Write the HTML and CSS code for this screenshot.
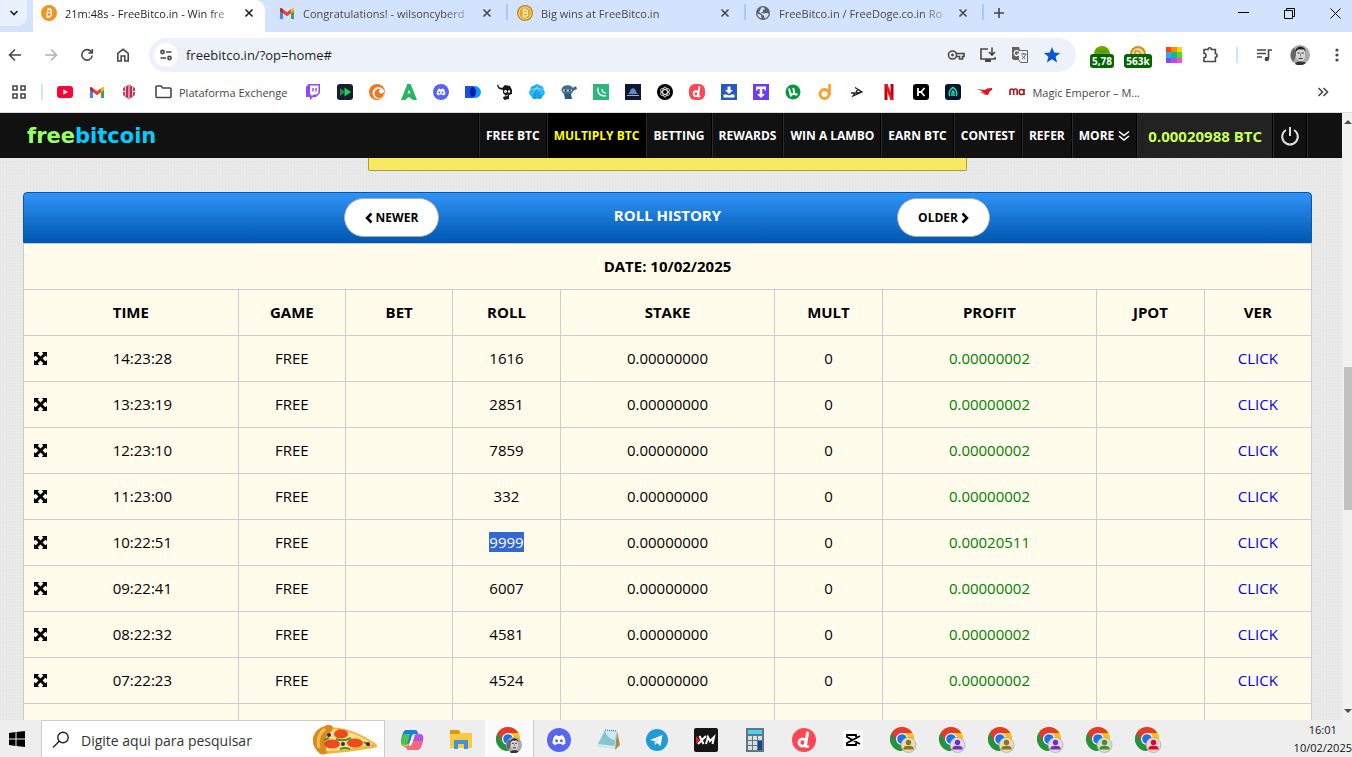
FILE: index.html
```html
<!DOCTYPE html>
<html lang="pt-BR">
<head>
    <meta charset="UTF-8">
    <meta name="viewport" content="width=device-width, initial-scale=1.0">
    <title>FreeBitco.in - Roll History</title>
    <link rel="stylesheet" href="styles.css">
</head>
<body>

<!-- shared icons -->
<svg class="sprite" aria-hidden="true">
    <symbol id="close" viewBox="0 0 10 10"><path d="M1.5 1.5l7 7M8.5 1.5l-7 7" fill="none" stroke="currentColor" stroke-width="1.6"/></symbol>
    <symbol id="gmail" viewBox="0 0 16 16">
        <path d="M1 3v11h3V7z" fill="#4285f4"/><path d="M15 3v11h-3V7z" fill="#34a853"/>
        <path d="M12 4.200l1.300-1C14 2.600 15 3 15 4.200V6l-3 2.300z" fill="#fbbc04"/>
        <path d="M4 4.200l4 3 4-3v4.100l-4 3-4-3z" fill="#ea4335"/>
        <path d="M1 4.200C1 3 2 2.600 2.700 3.200L4 4.200v4.100L1 6z" fill="#c5221f"/>
    </symbol>
    <symbol id="discord" viewBox="0 0 24 24">
        <circle cx="12" cy="12" r="12" fill="#5865f2"/>
        <path d="M8 7.500l2-.6.7 1h2.600l.7-1 2 .6c1.800 2.300 2.600 5 2.400 8-1 .9-2 1.400-3.200 1.700l-.9-1.500h-4.600l-.9 1.500c-1.200-.3-2.200-.8-3.200-1.700-.2-3 .6-5.700 2.400-8z" fill="#fff"/>
        <circle cx="9.600" cy="12.700" r="1.500" fill="#5865f2"/><circle cx="14.400" cy="12.700" r="1.500" fill="#5865f2"/>
    </symbol>
    <symbol id="letter-d" viewBox="0 0 24 24">
        <path d="M15.500 5l-2 11.500c-.2 1.500.5 2.300 2 2" fill="none" stroke="#fff" stroke-width="3" stroke-linecap="round"/>
        <ellipse cx="10.500" cy="14.500" rx="3.500" ry="3.700" fill="none" stroke="#fff" stroke-width="2.800"/>
    </symbol>
    <symbol id="chrome" viewBox="0 0 24 24">
        <circle cx="12" cy="12" r="12" fill="#fbc116"/>
        <path d="M1.600 6A12 12 0 0 0 12 24l5.200-9L12 12z" fill="#229342"/>
        <path d="M12 6h10.400A12 12 0 0 0 1.600 6l5.200 9z" fill="#e33b2e"/>
        <path d="M17.200 15L12 24A12 12 0 0 0 22.400 6H12z" fill="#fbc116"/>
        <circle cx="12" cy="12" r="6" fill="#fff"/><circle cx="12" cy="12" r="4.800" fill="#1a73e8"/>
    </symbol>
    <symbol id="chrome-profile" viewBox="0 0 27 27">
        <use href="#chrome" width="24" height="24"/>
        <circle cx="18.500" cy="18" r="7.500" stroke="#9a9a90" stroke-width=".6"/>
        <circle cx="18.500" cy="15.500" r="2.700" fill="currentColor"/>
        <path d="M13.500 22.500v-1.500c0-3 10-3 10 0v1.500z" fill="currentColor"/>
    </symbol>
    <symbol id="avatar" viewBox="0 0 20 20">
        <circle cx="10" cy="10" r="10" fill="#aaa"/>
        <path d="M3 17C0 12 0 6 4 3l3 4-2 6z" fill="#666"/>
        <path d="M6 7c0-6 9-6 9 0v5c-1 6-8 6-9 0z" fill="#d5d5d5"/>
        <path d="M5.500 7C5 0 16 0 15.500 7L14 4.500H8z" fill="#222"/>
        <path d="M7.500 8h2.200M11.500 8h2.200M8.500 13.500h4" stroke="#333" stroke-width="1.200"/>
        <path d="M10.500 8.500v3" stroke="#888"/>
        <path d="M5 19c1-2 3-2.500 5-2.500s5 .5 6 1.500c-4 3-8 3-11 1z" fill="#333"/>
    </symbol>
    <symbol id="expand" viewBox="0 0 14 14">
        <path d="M0 0h5.500L4 1.800l3 3 3-3L8.500 0H14v5.500L12.200 4l-3 3 3 3L14 8.500V14H8.500l1.500-1.800-3-3-3 3L5.500 14H0V8.500L1.800 10l3-3-3-3L0 5.500z"/>
    </symbol>
</svg>

<div class="tab-strip">
    <button class="tab-search" aria-label="Search tabs"><svg width="10" height="10" viewBox="0 0 10 10"><path d="M1.500 3l3.500 3.500L8.500 3" class="line"/></svg></button>
    <div class="tab active">
        <svg class="favicon" viewBox="0 0 16 16"><circle cx="8" cy="8" r="8" fill="#f7931a"/><path d="M6.500 4.500h2.300c2.300.2 2.100 3 0 3.200H6.300h2.800c2.300.3 2 3.700-.5 3.800H5.500M6.800 4.500l-1 7M7.500 3l-.3 1.500M9.300 3L9 4.500M6.700 11.500l-.3 1.500M8.500 11.500l-.3 1.500" fill="none" stroke="#fff" stroke-width="1.300"/></svg>
        <span class="tab-title">21m:48s - FreeBitco.in - Win fre</span>
        <button class="tab-close" aria-label="Close tab"><svg width="10" height="10"><use href="#close"/></svg></button>
    </div>
    <div class="tab">
        <svg class="favicon"><use href="#gmail"/></svg>
        <span class="tab-title">Congratulations! - wilsoncyberd</span>
        <button class="tab-close" aria-label="Close tab"><svg width="10" height="10"><use href="#close"/></svg></button>
    </div>
    <div class="tab">
        <svg class="favicon" viewBox="0 0 16 16"><circle cx="8" cy="8" r="8" fill="#b9851d"/><circle cx="8" cy="8" r="6.800" fill="#f4cf68"/><circle cx="8" cy="8" r="5.500" fill="#dca936"/><path d="M6.500 4.500v7M5.500 5h3.300c2 .2 2 2.700 0 2.900H6.500h2.700c2.100.3 2 3.100-.2 3.100H5.500M7 3.500V5M8.800 3.500V5M7 11v1.500M8.800 11v1.500" fill="none" stroke="#fff3c0" stroke-width="1.200"/></svg>
        <span class="tab-title">Big wins at FreeBitco.in</span>
        <button class="tab-close" aria-label="Close tab"><svg width="10" height="10"><use href="#close"/></svg></button>
    </div>
    <div class="tab">
        <svg class="favicon" viewBox="0 0 16 16"><circle cx="8" cy="8" r="7" fill="#5f6368"/><path d="M2.500 8.500L6 10l.5 3.500C4 13 2.500 11 2.500 8.500zM6.500 2.500l2-.3L10 4 8 5v1.500L6 7.500l2.500 1L11 8l2.800.5c-.3 2.500-2 4.300-4 5L9 11 6 8.500 4 7z" fill="#d3e3fd"/></svg>
        <span class="tab-title">FreeBitco.in / FreeDoge.co.in Ro</span>
        <button class="tab-close" aria-label="Close tab"><svg width="10" height="10"><use href="#close"/></svg></button>
    </div>
    <button class="new-tab" aria-label="New tab"><svg width="12" height="12" viewBox="0 0 12 12"><path d="M6 1v10M1 6h10" class="line"/></svg></button>
    <div class="window-controls">
        <button aria-label="Minimize"><svg width="11" height="11" viewBox="0 0 11 11"><path d="M0 4.500h11" class="hair"/></svg></button>
        <button aria-label="Restore"><svg width="11" height="11" viewBox="0 0 11 11"><path d="M.5 2.500h8v8h-8zM2.500 2.500v-2h8v8h-2" class="hair"/></svg></button>
        <button aria-label="Close"><svg width="11" height="11" viewBox="0 0 11 11"><path d="M.5.5l10 10M10.500.5l-10 10" class="hair"/></svg></button>
    </div>
</div>

<div class="toolbar">
    <div class="nav-buttons">
        <button class="icon-btn" aria-label="Back"><svg width="16" height="16" viewBox="0 0 16 16"><path d="M14 8H3M8 2.500L2.500 8 8 13.500" class="line"/></svg></button>
        <button class="icon-btn disabled" aria-label="Forward"><svg width="16" height="16" viewBox="0 0 16 16"><path d="M2 8h11M8 2.500L13.500 8 8 13.500" class="line"/></svg></button>
        <button class="icon-btn" aria-label="Reload"><svg width="16" height="16" viewBox="0 0 16 16"><path d="M13.200 8.500A5.200 5.200 0 1 1 12 4.500l1 1.200M13.300 2v4H9.300" class="line"/></svg></button>
        <button class="icon-btn" aria-label="Home"><svg width="16" height="16" viewBox="0 0 16 16"><path d="M2.800 14V6.300L8 2.300l5.200 4V14H9.800V9H6.200v5z" class="line"/></svg></button>
    </div>
    <div class="omnibox">
        <button class="site-info" aria-label="Site information"><svg width="14" height="14" viewBox="0 0 14 14"><circle cx="3.500" cy="4" r="1.600" class="line"/><path d="M7 4h5.500M1.500 10H7" class="line"/><circle cx="10.500" cy="10" r="1.600" class="line"/></svg></button>
        <input class="url" type="text" aria-label="Address" value="freebitco.in/?op=home#">
        <button class="omni-btn" aria-label="Passwords"><svg width="18" height="18" viewBox="0 0 18 18"><circle cx="5.500" cy="9" r="4" class="line"/><circle cx="5.500" cy="9" r="1.400" fill="currentColor"/><path d="M9 7.500h8v3h-1.500V13h-3v-2.500H9" class="line"/></svg></button>
        <button class="omni-btn" aria-label="Install"><svg width="18" height="18" viewBox="0 0 18 18"><path d="M9 3H2v10h14v-2M13 1.500v7M10 6l3 3 3-3" class="line"/><path d="M6 13h6v3H6z" fill="currentColor"/></svg></button>
        <button class="omni-btn" aria-label="Translate"><svg width="18" height="18" viewBox="0 0 18 18"><path d="M1 1h7l4 13H2.500L1 12.500z" fill="#5f6368"/><path d="M8 4.500h8.500v12h-7L8 14" fill="#edf2fa" stroke="#5f6368"/><path d="M7.500 5.500a2.500 2.500 0 1 0 .5 2.500H6" fill="none" stroke="#fff" stroke-width="1.200"/><path d="M10 8h5.500M12.700 6.800V8M14.500 8c-.5 2.500-2 4-3.500 5M11 9.500c.8 1.500 2 2.800 3.500 3.500" fill="none" stroke="#5f6368"/></svg></button>
        <button class="omni-btn" aria-label="Bookmarked"><svg width="18" height="18" viewBox="0 0 18 18"><path d="M9 1l2.200 5.500 6 .4-4.600 3.800 1.500 5.800L9 13.300l-5.100 3.200 1.500-5.800L.8 6.900l6-.4z" fill="#0b57d0"/></svg></button>
    </div>
    <div class="extensions">
        <button class="icon-btn ext"><svg width="16" height="8" viewBox="0 0 16 8"><path d="M0 8a8 8 0 0 1 16 0z" fill="#67a800"/><path d="M3 4c3 2 7 2 10 0" stroke="#4c8500" fill="none"/></svg><span class="ext-badge">5,78</span></button>
        <button class="icon-btn ext"><svg width="16" height="8" viewBox="0 0 16 8"><path d="M0 8a8 8 0 0 1 16 0z" fill="#c89326"/><path d="M2 8a6 6 0 0 1 12 0z" fill="#f2d68b"/><path d="M5 8V5h4l2 3" stroke="#b08020" fill="none"/></svg><span class="ext-badge">563k</span></button>
        <button class="icon-btn" aria-label="Color extension"><svg width="16" height="16" viewBox="0 0 16 16" shape-rendering="crispEdges"><path d="M0 0h5v5H0z" fill="#ff4400"/><path d="M5 0h6v5H5z" fill="#ff8c00"/><path d="M11 0h5v5h-5z" fill="#ffd400"/><path d="M0 5h5v6H0z" fill="#36a2f5"/><path d="M5 5h6v6H5z" fill="#12b981"/><path d="M11 5h5v6h-5z" fill="#52d62c"/><path d="M0 11h5v5H0z" fill="#7d4dff"/><path d="M5 11h6v5H5z" fill="#b04cff"/><path d="M11 11h5v5h-5z" fill="#ff50c8"/></svg></button>
        <button class="icon-btn" aria-label="Extensions"><svg width="18" height="18" viewBox="0 0 18 18"><path d="M3 3.500h4a1.700 1.700 0 0 1 3.400 0h4v4.300a1.700 1.700 0 0 1 0 3.400v4.300H3v-3.700c2.700-.3 2.700-4.200 0-4.500z" class="line"/></svg></button>
        <span class="divider"></span>
        <button class="icon-btn" aria-label="Media"><svg width="16" height="16" viewBox="0 0 16 16"><path d="M1 3h9M1 6.500h9M1 10h5M12.500 12V3H16" class="line"/><circle cx="10.800" cy="12" r="2.200" fill="currentColor"/></svg></button>
        <button class="icon-btn" aria-label="Profile"><svg width="20" height="20"><use href="#avatar"/></svg></button>
        <button class="icon-btn kebab" aria-label="Menu"><svg width="4" height="16" viewBox="0 0 4 16" fill="currentColor"><circle cx="2" cy="3" r="1.600"/><circle cx="2" cy="8" r="1.600"/><circle cx="2" cy="13" r="1.600"/></svg></button>
    </div>
</div>

<nav class="bookmarks">
    <button class="apps" aria-label="Apps"><svg width="14" height="14" viewBox="0 0 14 14"><path d="M1 1h4v4H1zM9 1h4v4H9zM1 9h4v4H1zM9 9h4v4H9z" class="line"/></svg></button>
    <span class="divider"></span>
    <a href="#" class="bm"><svg viewBox="0 0 16 16"><rect y="2" width="16" height="12" rx="3" fill="#f03"/><path d="M6.300 5.300v5.400L11 8z" fill="#fff"/></svg></a>
    <a href="#" class="bm"><svg><use href="#gmail"/></svg></a>
    <a href="#" class="bm"><svg viewBox="0 0 16 16"><path d="M8 .5l6 3.500v7L8 15.500 2 11V4z" fill="#c94463"/><path d="M4.500 3v8.500M11.500 3v8.500M8 1v14M2 7.500h3M11 7.500h3" stroke="#f6d4dc" fill="none"/><path d="M6 3v10M10 3v10" stroke="#a11f40" fill="none"/></svg></a>
    <a href="#" class="bm-folder"><svg width="17" height="14" viewBox="0 0 17 14"><path d="M1 2c0-.6.400-1 1-1h4l1.800 2H15c.6 0 1 .4 1 1v7.500c0 .6-.4 1-1 1H2c-.6 0-1-.4-1-1z" class="line"/></svg>Plataforma Exchenge</a>
    <a href="#" class="bm"><svg viewBox="0 0 16 16"><path d="M3.500 0H15v9l-4 4H8l-3 3v-3H1V3z" fill="#9146ff"/><path d="M5 1.500h8.500v7l-2 2H8.500l-2 2v-2H5z" fill="#fff"/><path d="M8 4v3.500M11 4v3.500" stroke="#9146ff" stroke-width="1.400"/></svg></a>
    <a href="#" class="bm"><svg viewBox="0 0 16 16"><rect width="16" height="16" rx="3" fill="#16202c"/><path d="M3 4l5 4-5 4z" fill="#3d7a5c"/><path d="M7.500 3.500L14 8l-6.500 4.500z" fill="#17d65b"/></svg></a>
    <a href="#" class="bm"><svg viewBox="0 0 16 16"><circle cx="8" cy="8" r="8" fill="#f47521"/><circle cx="9.500" cy="9" r="6" fill="#fff"/><circle cx="10.200" cy="9.500" r="4.700" fill="#f47521"/><circle cx="12.300" cy="7.300" r="2.300" fill="#fff"/></svg></a>
    <a href="#" class="bm"><svg viewBox="0 0 16 16"><path d="M6.300 0h3.400L16 16h-4L8 13l-4 3H0z" fill="#28b463"/><path d="M8 5.500l1.600 4.500L8 9l-1.600 1z" fill="#fff"/></svg></a>
    <a href="#" class="bm"><svg><use href="#discord"/></svg></a>
    <a href="#" class="bm"><svg viewBox="0 0 16 16"><path d="M0 2h8c8 0 8 12 0 12H0z" fill="#1951d8"/><path d="M8 2c10-1 11 13 0 12z" fill="#0697ff"/><ellipse cx="8" cy="8" rx="3" ry="5" fill="#0817ab"/></svg></a>
    <a href="#" class="bm"><svg viewBox="0 0 16 16"><path d="M1 0l1 3 3 1 3-3 5 1 2 4v4l-3 1v4l-5 1-1-3 3-1-3-3V6L2 5 0 2z" fill="#181818"/><circle cx="8.500" cy="7.500" r="1.400" fill="#fff"/><circle cx="12" cy="7.500" r="1.200" fill="#fff"/><path d="M9 12l2-1" stroke="#ddd"/></svg></a>
    <a href="#" class="bm"><svg viewBox="0 0 16 16"><path d="M8 0l6 3 2 6-4 6H4L0 9l2-6z" fill="#19aef5"/><path d="M8 2v13M8 4L2 10M8 4l6 6M1 6l7-2 7 2" stroke="#a3eaff" stroke-width=".7" fill="none"/><path d="M8 4l4 10H4z" fill="#0788cf" opacity=".5"/></svg></a>
    <a href="#" class="bm"><svg viewBox="0 0 16 16"><path d="M10 5l5-3 1 3-4 2z" fill="#356c9b"/><ellipse cx="6.500" cy="6" rx="6" ry="4.800" fill="#336f9f"/><path d="M2 5.500h9v2H2z" fill="#e6b98f"/><path d="M4 6.500h1.500M8 6.500h1.500" stroke="#111" stroke-width="1.300"/><path d="M3 10h7l1 5H4z" fill="#275c89"/></svg></a>
    <a href="#" class="bm"><svg viewBox="0 0 16 16"><path d="M0 0h16v16H0z" fill="#2eb57b"/><path d="M5 3.500c-1 6 2 8.500 8 8.500M9 5c0 3 1 4 4 4" fill="none" stroke="#fff" stroke-width="1.200"/></svg></a>
    <a href="#" class="bm"><svg viewBox="0 0 16 16"><path d="M0 0h16v16H0z" fill="#0e1630"/><path d="M5 8c0-5 6-5 6 0l2 2H3z" fill="#6189c5"/><path d="M2 11.500h12" stroke="#9ab5dc"/></svg></a>
    <a href="#" class="bm"><svg viewBox="0 0 16 16"><circle cx="8" cy="8" r="8"/><g fill="none" stroke="#fff" stroke-width=".8"><ellipse cx="8" cy="8" rx="2.300" ry="5"/><ellipse cx="8" cy="8" rx="2.300" ry="5" transform="rotate(60 8 8)"/><ellipse cx="8" cy="8" rx="2.300" ry="5" transform="rotate(120 8 8)"/></g></svg></a>
    <a href="#" class="bm"><svg viewBox="0 0 24 24"><rect width="24" height="24" rx="9" fill="#ff4655"/><use href="#letter-d"/></svg></a>
    <a href="#" class="bm"><svg viewBox="0 0 16 16"><path d="M0 0h16v16H0z" fill="#2858c4"/><path d="M6.500 2.500h3V6H12l-4 4-4-4h2.500zM2.500 10.500h3l2.500 1 2.500-1h3v3h-11z" fill="#fff"/></svg></a>
    <a href="#" class="bm"><svg viewBox="0 0 16 16"><path d="M0 0h16v16H0z" fill="#6b3df0"/><path d="M3 2.500h10v4h-1.500V5H9.300v5H12l-4 4-4-4h2.700V5H4.500v1.500H3z" fill="#fff"/></svg></a>
    <a href="#" class="bm"><svg viewBox="0 0 16 16"><circle cx="8" cy="8" r="7.500" fill="#0a963f"/><path d="M4 4.500l2 8M5 8c.8 3.500 4.500 3 4-.5l-.8-3.500M9 8c.5 2.500 1.500 3 3.500 2.200" fill="none" stroke="#fff" stroke-width="1.900"/></svg></a>
    <a href="#" class="bm"><svg viewBox="0 0 16 16"><circle cx="7.500" cy="10" r="4.500" fill="none" stroke="#fe9d28" stroke-width="2.800"/><path d="M12.500 0v11" stroke="#fe9d28" stroke-width="2.600"/></svg></a>
    <a href="#" class="bm"><svg viewBox="0 0 16 16"><path d="M6 3.500L13 8 4 12l2-3M2 9h6l5-1M9 5.500L7 8" fill="none" stroke="#222" stroke-width="1.300"/></svg></a>
    <a href="#" class="bm"><svg viewBox="0 0 16 16"><path d="M3.500 0h3v16h-3zM9.500 0h3v16h-3z" fill="#b20710"/><path d="M3.500 0h3l6 16h-3z" fill="#f01020"/></svg></a>
    <a href="#" class="bm"><svg viewBox="0 0 16 16"><rect width="16" height="16" rx="3"/><path d="M5 4v8M11.500 4L8 8H5h3l3.500 4" fill="none" stroke="#fff" stroke-width="1.800"/></svg></a>
    <a href="#" class="bm"><svg viewBox="0 0 16 16"><rect width="16" height="16" rx="3" fill="#09152e"/><path d="M5 12C3 9 5 5 8 3.500c3 1.500 5 5.500 3 8.500M7 12V8.500L8 7l1 1.500V12" fill="none" stroke="#20e2ac" stroke-width="1.500"/></svg></a>
    <a href="#" class="bm"><svg viewBox="0 0 16 16"><path d="M0 5l8 1 2-1.500 5-.5v2l-2 1-2 4-6-1 3-1-5-.5 3-1z" fill="#dc161e"/></svg></a>
    <a href="#" class="bm-ma"><svg width="16" height="16" viewBox="0 0 16 16"><path d="M1 11V7q0-2 1.800-2T4.600 7v4V7q0-2 1.800-2t1.800 2v4M10.300 8q0-2.500 2.300-2.500T15 8t-2.400 2.500T10.300 8M15 5v6" fill="none" stroke="#a41e29" stroke-width="1.700"/></svg>Magic Emperor – M...</a>
    <button class="more-bm" aria-label="More bookmarks"><svg width="12" height="10" viewBox="0 0 12 10"><path d="M1.500 1l4 4-4 4M6.500 1l4 4-4 4" class="line"/></svg></button>
</nav>

<div class="viewport">
    <div class="site">
        <header class="site-header">
            <a href="#" class="logo">free<span>bitcoin</span></a>
            <nav class="menu">
                <a href="#">FREE BTC</a>
                <a href="#" class="current">MULTIPLY BTC</a>
                <a href="#">BETTING</a>
                <a href="#">REWARDS</a>
                <a href="#">WIN A LAMBO</a>
                <a href="#">EARN BTC</a>
                <a href="#">CONTEST</a>
                <a href="#">REFER</a>
                <a href="#">MORE <svg width="12" height="12" viewBox="0 0 12 12"><path d="M1 1.500l5 4 5-4M1 6l5 4 5-4" fill="none" stroke="#fff" stroke-width="1.600"/></svg></a>
                <a href="#" class="balance">0.00020988 BTC</a>
                <a href="#" class="logout" aria-label="Logout"><svg width="20" height="20" viewBox="0 0 20 20"><path d="M6 4a7.800 7.800 0 1 0 8 0M10 1v9" fill="none" stroke="#ddd" stroke-width="2"/></svg></a>
            </nav>
        </header>
        <main class="content">
            <div class="notice"></div>
            <section class="history">
                <div class="history-header">
                    <button class="pager"><svg width="8" height="12" viewBox="0 0 8 12"><path d="M6.500 1.500L2 6l4.500 4.500" fill="none" stroke="#000" stroke-width="2.500"/></svg> NEWER</button>
                    <h2>ROLL HISTORY</h2>
                    <button class="pager">OLDER <svg width="8" height="12" viewBox="0 0 8 12"><path d="M1.500 1.500L6 6l-4.500 4.500" fill="none" stroke="#000" stroke-width="2.500"/></svg></button>
                </div>
                <table>
                    <colgroup>
                        <col class="wide"><col><col><col><col class="wide"><col><col class="wide"><col><col>
                    </colgroup>
                    <thead>
                        <tr><th colspan="9">DATE: 10/02/2025</th></tr>
                        <tr><th>TIME</th><th>GAME</th><th>BET</th><th>ROLL</th><th>STAKE</th><th>MULT</th><th>PROFIT</th><th>JPOT</th><th>VER</th></tr>
                    </thead>
                    <tbody>
                        <tr><td><svg class="expand"><use href="#expand"/></svg>14:23:28</td><td>FREE</td><td></td><td>1616</td><td>0.00000000</td><td>0</td><td class="profit">0.00000002</td><td></td><td><a href="#">CLICK</a></td></tr>
                        <tr><td><svg class="expand"><use href="#expand"/></svg>13:23:19</td><td>FREE</td><td></td><td>2851</td><td>0.00000000</td><td>0</td><td class="profit">0.00000002</td><td></td><td><a href="#">CLICK</a></td></tr>
                        <tr><td><svg class="expand"><use href="#expand"/></svg>12:23:10</td><td>FREE</td><td></td><td>7859</td><td>0.00000000</td><td>0</td><td class="profit">0.00000002</td><td></td><td><a href="#">CLICK</a></td></tr>
                        <tr><td><svg class="expand"><use href="#expand"/></svg>11:23:00</td><td>FREE</td><td></td><td>332</td><td>0.00000000</td><td>0</td><td class="profit">0.00000002</td><td></td><td><a href="#">CLICK</a></td></tr>
                        <tr><td><svg class="expand"><use href="#expand"/></svg>10:22:51</td><td>FREE</td><td></td><td><mark>9999</mark></td><td>0.00000000</td><td>0</td><td class="profit">0.00020511</td><td></td><td><a href="#">CLICK</a></td></tr>
                        <tr><td><svg class="expand"><use href="#expand"/></svg>09:22:41</td><td>FREE</td><td></td><td>6007</td><td>0.00000000</td><td>0</td><td class="profit">0.00000002</td><td></td><td><a href="#">CLICK</a></td></tr>
                        <tr><td><svg class="expand"><use href="#expand"/></svg>08:22:32</td><td>FREE</td><td></td><td>4581</td><td>0.00000000</td><td>0</td><td class="profit">0.00000002</td><td></td><td><a href="#">CLICK</a></td></tr>
                        <tr><td><svg class="expand"><use href="#expand"/></svg>07:22:23</td><td>FREE</td><td></td><td>4524</td><td>0.00000000</td><td>0</td><td class="profit">0.00000002</td><td></td><td><a href="#">CLICK</a></td></tr>
                        <tr><td></td><td></td><td></td><td></td><td></td><td></td><td></td><td></td><td></td></tr>
                    </tbody>
                </table>
            </section>
        </main>
    </div>
    <div class="scrollbar">
        <svg width="8" height="4" viewBox="0 0 8 4"><path d="M4 0l4 4H0z" fill="#505050"/></svg>
        <div class="thumb"></div>
        <svg width="8" height="4" viewBox="0 0 8 4"><path d="M0 0h8L4 4z" fill="#505050"/></svg>
    </div>
</div>

<footer class="taskbar">
    <button class="start" aria-label="Start"><svg width="16" height="16" viewBox="0 0 16 16"><path d="M0 2l6.500-.9v6.400H0zM7.500 1L16 0v7.500H7.500zM0 8.500h6.500v6.400L0 14zM7.500 8.500H16V16l-8.500-1z"/></svg></button>
    <div class="task-search">
        <svg width="18" height="18" viewBox="0 0 18 18"><circle cx="11" cy="6.500" r="5.200" fill="none" stroke="#222" stroke-width="1.400"/><path d="M7.200 10.300L1 16.500" stroke="#222" stroke-width="1.400"/></svg>
        <input type="text" placeholder="Digite aqui para pesquisar" aria-label="Digite aqui para pesquisar">
        <svg width="66" height="32" viewBox="0 0 66 32">
            <path d="M8 4Q36 0 64 20q3 3-2 4Q38 28 14 30z" fill="#f3b33c"/>
            <path d="M12 5Q38 4 61 20 38 26 14 27z" fill="#ffe08a"/>
            <path d="M13 2q5-3 8 1l-1 4Q11 12 14 25l1 4q-4 3-8 0Q-3 19 3 9q3-5 10-7z" fill="#d98a1f"/>
            <path d="M13 5Q4 11 7 24" fill="none" stroke="#f7b951" stroke-width="3"/>
            <ellipse cx="29" cy="10" rx="7" ry="4.500" fill="#ed4b1d"/><ellipse cx="20" cy="20" rx="8" ry="4.500" fill="#ed4b1d"/><ellipse cx="43" cy="19" rx="8" ry="4.500" fill="#ed4b1d"/>
            <path d="M24 15q7 3 15-1M28 25q5-2 10 0M52 18q3 3 6 3M12 16l5-2" fill="none" stroke="#3b9a20" stroke-width="2"/>
            <circle cx="17" cy="11" r="2" fill="#3a265e"/><circle cx="31" cy="20" r="2" fill="#3a265e"/><circle cx="56" cy="20" r="2" fill="#3a265e"/>
        </svg>
    </div>
    <button class="task"><svg width="24" height="24" viewBox="0 0 24 24"><path d="M6 2h9c2 0 3 2 3 4h-3c-3 0-3 2-4 5l-2 6c-1 3-8 2-8-2C1 10 3 2 6 2z" fill="#1683d8"/><path d="M4 6h6L7 17c-2 3-6 1-6-2 0-3 1-7 3-9z" fill="#4cc353"/><path d="M1 14c0 4 7 4 9 0l-2 4H4c-2 0-3-2-3-4z" fill="#f6c51c"/><path d="M17 6h3c3 0 4 3 3 7-2 7-3 9-6 9H9c-2 0-3-2-3-4h3c3 0 3-2 4-5l1-4c.5-2 1-3 3-3z" fill="#b652e0"/><path d="M6 18h3c3 0 3-2 4-5h9c-1 5-3 9-5 9H9c-2 0-3-2-3-4z" fill="#fa6a72"/><path d="M13.500 8L10.500 16" stroke="#fff" stroke-width="2"/></svg></button>
    <button class="task"><svg width="24" height="24" viewBox="0 0 24 24"><path d="M1 2h9l2 3h11v15H1z" fill="#ffc93f"/><path d="M1 2h9l1 3-1 1H1z" fill="#d39a12"/><path d="M5 21v-9h14v9h-4v-5H9v5z" fill="#3a95dc"/></svg></button>
    <button class="task running"><svg width="27" height="27" viewBox="0 0 27 27"><use href="#chrome" width="24" height="24"/><use href="#avatar" x="10" y="10" width="16" height="16"/></svg></button>
    <button class="task"><svg width="24" height="24"><use href="#discord"/></svg></button>
    <button class="task"><svg width="24" height="24" viewBox="0 0 24 24"><path d="M21 3l3 14-5 5z" fill="#a88b56"/><path d="M9 2l12 1-3 18-17-3z" fill="#83c5d0"/><path d="M9 2l12 1-2 9C12 11 9 5 9 2z" fill="#c9ebef"/><path d="M1 18l17 3 .5-3L2 16z" fill="#dce9ec"/><path d="M9 2l12 1" stroke="#666" stroke-dasharray="1 1"/></svg></button>
    <button class="task"><svg width="22" height="22" viewBox="0 0 22 22"><circle cx="11" cy="11" r="11" fill="#229bd5"/><path d="M4 11l12.500-5-2 11-3.500-3-2 2-.5-4z" fill="#fff"/><path d="M8.500 12L14 8.500 10 13l-1 2.500z" fill="#a8d4eb"/></svg></button>
    <button class="task"><svg width="24" height="24" viewBox="0 0 24 24"><rect width="24" height="24" rx="2" fill="#151515"/><path d="M2 8l4 4-4 4z" fill="#e01b22"/><path d="M5.500 8l4 8M12 8l-8 8M12 16l2-7 2 4 4-4-1.500 7" fill="none" stroke="#fff" stroke-width="2"/></svg></button>
    <button class="task"><svg width="18" height="24" viewBox="0 0 18 24"><path d="M0 0h18v24H0z" fill="#667681"/><path d="M2 2h14v4H2z" fill="#46d3fa"/><path d="M2 8h4v4H2zM7 8h4v4H7zM12 8h4v4h-4zM2 13h4v4H2zM7 13h4v4H7zM2 18h4v4H2zM7 18h4v4H7z" fill="#d5dfe5"/><path d="M12 13h4v9h-4z" fill="#0d4a94"/></svg></button>
    <button class="task"><svg width="24" height="24" viewBox="0 0 24 24"><circle cx="12" cy="12" r="12" fill="#ff4655"/><use href="#letter-d"/></svg></button>
    <button class="task"><svg width="20" height="20" viewBox="0 0 20 20"><rect width="20" height="20" rx="3" fill="#fff"/><path d="M17 6L4 13v2h9v-2M17 14L4 7V5h9v2" fill="none" stroke="#000" stroke-width="1.800"/></svg></button>
    <button class="task olive"><svg width="27" height="27"><use href="#chrome-profile"/></svg></button>
    <button class="task purple"><svg width="27" height="27"><use href="#chrome-profile"/></svg></button>
    <button class="task olive"><svg width="27" height="27"><use href="#chrome-profile"/></svg></button>
    <button class="task purple"><svg width="27" height="27"><use href="#chrome-profile"/></svg></button>
    <button class="task green"><svg width="27" height="27"><use href="#chrome-profile"/></svg></button>
    <button class="task red"><svg width="27" height="27"><use href="#chrome-profile"/></svg></button>
    <div class="clock"><span>16:01</span><span>10/02/2025</span></div>
</footer>

</body>
</html>
```

FILE: styles.css
```css
* {
    box-sizing: border-box;
}

body {
    margin: 0;
    height: 100vh;
    display: flex;
    flex-direction: column;
    overflow: hidden;
    font-family: 'Open Sans', sans-serif;
    font-size: 12px;
    color: #1f1f1f;
    background-color: #fff;
}

button {
    display: flex;
    align-items: center;
    justify-content: center;
    flex-shrink: 0;
    padding: 0;
    border: none;
    background: none;
    color: #474747;
    font-family: inherit;
}

a {
    text-decoration: none;
}

input {
    border: none;
    outline: none;
    padding: 0;
    min-width: 0;
    background: none;
    font-family: inherit;
}

svg {
    flex-shrink: 0;
}

.sprite {
    position: absolute;
    width: 0;
    height: 0;
}

.line {
    fill: none;
    stroke: currentColor;
    stroke-width: 1.6;
}

.hair {
    fill: none;
    stroke: #000;
}

.divider {
    width: 2px;
    height: 16px;
    background-color: #d3e3fd;
}

/* tabs */
.tab-strip {
    display: flex;
    height: 32px;
    background-color: #d3e3fd;
    font-size: 11px;
}

.tab-search {
    width: 27px;
    height: 26px;
    margin-right: 6px;
    border-radius: 0 0 10px 0;
    background-color: #e9f1fe;
    color: #1f1f1f;
}

.tab {
    display: flex;
    align-items: center;
    width: 238px;
    height: 26px;
    padding: 0 14px 0 8px;
    position: relative;
    color: #474747;
}

.tab.active {
    width: 232px;
    height: 32px;
    margin-right: 6px;
    padding: 0 8px 6px;
    border-radius: 0 10px 0 0;
    background-color: #fff;
    color: #1f1f1f;
}

.tab:not(.active)::after {
    content: '';
    position: absolute;
    right: 1px;
    top: 4px;
    width: 2px;
    height: 16px;
    background-color: #a8c7fa;
}

.favicon {
    width: 16px;
    height: 16px;
}

.tab-title {
    flex: 1;
    margin: 0 6px 0 8px;
    white-space: nowrap;
    mask-image: linear-gradient(to right, #000 142px, transparent 176px);
}

.tab-close {
    width: 16px;
    height: 16px;
    color: inherit;
}

.new-tab {
    width: 28px;
    height: 26px;
}

.window-controls {
    display: flex;
    margin-left: auto;
}

.window-controls button {
    width: 46px;
    height: 26px;
}

.window-controls button:last-child {
    width: 40px;
    padding-left: 6px;
}

/* toolbar */
.toolbar {
    display: flex;
    align-items: center;
    height: 46px;
}

.nav-buttons {
    display: flex;
    margin: 0 8px 0 -3px;
}

.icon-btn {
    width: 36px;
    height: 34px;
}

.icon-btn.disabled {
    color: #b0b0b0;
}

.icon-btn.kebab {
    width: 30px;
    margin-left: 4px;
}

.omnibox {
    flex: 1;
    display: flex;
    align-items: center;
    height: 34px;
    padding: 0 8px 0 5px;
    border-radius: 17px;
    background-color: #edf2fa;
}

.site-info {
    width: 24px;
    height: 24px;
    margin-right: 8px;
    border-radius: 50%;
    background-color: #fff;
}

.url {
    flex: 1;
    font-size: 13px;
    color: #1f1f1f;
}

.omni-btn {
    width: 32px;
    height: 32px;
}

.extensions {
    display: flex;
    align-items: center;
    margin-left: 8px;
}

.extensions .divider {
    margin: 0 8px;
}

.ext {
    flex-direction: column;
    padding-top: 4px;
}

.ext-badge {
    padding: 0 2px;
    border-radius: 3px;
    background-color: #060;
    color: #fff;
    font-size: 10px;
    font-weight: bold;
    line-height: 14px;
}

/* bookmarks */
.bookmarks {
    display: flex;
    align-items: center;
    height: 35px;
    padding: 0 11px 6px 11px;
    border-bottom: 1px solid #dadce0;
    font-size: 11px;
}

.apps {
    width: 16px;
}

.bookmarks .divider {
    margin: 0 6px 0 14px;
}

.bm {
    display: flex;
    justify-content: center;
    width: 32px;
}

.bm svg {
    width: 16px;
    height: 16px;
}

.bm-folder,
.bm-ma {
    display: flex;
    align-items: center;
    gap: 7px;
    margin: 0 10px;
    white-space: nowrap;
    color: #474747;
}

.bm-ma {
    margin-left: 8px;
}

.more-bm {
    width: 36px;
    margin-left: auto;
}

/* page */
.viewport {
    flex: 1;
    display: flex;
    min-height: 0;
}

.site {
    flex: 1;
    display: flex;
    flex-direction: column;
    min-width: 0;
    overflow: hidden;
    background-color: #eaeaea;
    background-image:
        repeating-linear-gradient(0deg, rgba(0, 0, 0, 0.01) 0 1px, transparent 1px 3px),
        repeating-linear-gradient(90deg, rgba(0, 0, 0, 0.01) 0 1px, transparent 1px 3px);
}

.site-header {
    display: flex;
    justify-content: space-between;
    flex-shrink: 0;
    height: 45px;
    padding: 0 34px 0 27px;
    background-color: #111;
}

.logo {
    align-self: center;
    font-family: 'DejaVu Sans', sans-serif;
    font-size: 21px;
    font-weight: bold;
    color: #9f6;
}

.logo span {
    color: #0cf;
}

.menu {
    display: flex;
    border-left: 1px solid #000;
    border-right: 1px solid #2b2b2b;
}

.menu a {
    display: flex;
    align-items: center;
    gap: 4px;
    padding: 0 6px;
    border-left: 1px solid #2b2b2b;
    border-right: 1px solid #000;
    font-weight: bold;
    white-space: nowrap;
    color: #fff;
}

.menu .current {
    background-color: #000;
    color: #ff0;
}

.menu .balance {
    padding: 0 10px;
    background-color: #222;
    font-size: 15px;
    color: #cf5;
}

.content {
    flex: 1;
    min-height: 0;
    padding: 0 30px 0 23px;
    overflow: hidden;
}

.notice {
    max-width: 599px;
    height: 13px;
    margin: 0 auto 21px;
    border: 1px solid #a89c3c;
    border-top: none;
    border-radius: 0 0 2px 2px;
    background-color: #f8e962;
}

.history-header {
    display: grid;
    grid-template-columns: repeat(3, 1fr);
    align-items: center;
    justify-items: center;
    height: 51px;
    padding: 0 17.8%;
    border: 1px solid #0058b0;
    border-radius: 4px 4px 0 0;
    background-image: linear-gradient(#3093f7, #0058b0);
}

.history-header h2 {
    margin: 0 0 6px;
    font-size: 15px;
    color: #fff;
}

.pager {
    gap: 3px;
    height: 39px;
    padding: 0 20px;
    border: 1px solid #aaa;
    border-radius: 20px;
    background-color: #fff;
    font-size: 12px;
    font-weight: bold;
    color: #000;
}

table {
    width: 100%;
    table-layout: fixed;
    border-collapse: collapse;
    background-color: #fffcec;
    font-size: 15px;
    color: #000;
}

.wide {
    width: 16.667%;
}

th,
td {
    height: 46px;
    padding: 0 10px 2px;
    border: 1px solid #ccc;
    text-align: center;
}

.expand {
    float: left;
    width: 13px;
    height: 13px;
    margin: 4px 10px 0 0;
}

.profit {
    color: #008000;
}

td a {
    color: #00f;
}

mark {
    background-color: #3367d1;
    color: #fff;
}

.scrollbar {
    display: flex;
    flex-direction: column;
    align-items: flex-end;
    justify-content: space-between;
    width: 10px;
    padding: 7px 0;
    background-color: #f1f1f1;
}

.thumb {
    width: 8px;
    height: 24%;
    margin-top: 44px;
    background-color: #c1c1c1;
}

/* taskbar */
.taskbar {
    display: flex;
    align-items: center;
    height: 37px;
    background-color: #eee;
}

.start {
    width: 34px;
    height: 37px;
    margin-right: 7px;
}

.task-search {
    display: flex;
    align-items: center;
    align-self: stretch;
    width: 344px;
    margin-right: 2px;
    padding: 2px 6px 0 10px;
    border: 1px solid #ccc;
    border-bottom: none;
    background-color: #fff;
}

.task-search input {
    flex: 1;
    margin-left: 11px;
    font-size: 14px;
}

.task-search input::placeholder {
    color: #333;
}

.task {
    width: 49px;
    height: 37px;
    padding-top: 3px;
}

.running {
    border-right: 1px solid #ccc;
    background-color: #fafafa;
}

.olive,
.purple,
.green,
.red {
    padding-left: 3px;
}

.olive {
    color: #8a752b;
    fill: #e9dcb3;
}

.purple {
    color: #7231b5;
    fill: #e5d8f5;
}

.green {
    color: #55853c;
    fill: #cfe2c4;
}

.red {
    color: #d8082c;
    fill: #fad0d7;
}

.clock {
    display: flex;
    flex-direction: column;
    align-items: center;
    margin-left: auto;
    font-size: 11px;
    line-height: 18px;
    color: #111;
}
```
